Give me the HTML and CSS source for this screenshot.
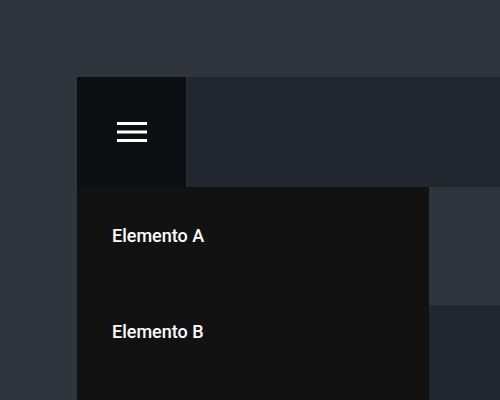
FILE: index.html
```html
<!DOCTYPE html>
<html lang="es">
<head>
<meta charset="utf-8">
<title>Menu</title>
<link rel="stylesheet" href="styles.css">
</head>
<body>
<div class="app">
  <header class="topbar">
    <button class="menu-btn" aria-label="Menú">
      <svg width="30" height="20" viewBox="0 0 30 20" aria-hidden="true">
        <rect x="0" y="0" width="30" height="3" fill="#ffffff"/>
        <rect x="0" y="8.5" width="30" height="3" fill="#ffffff"/>
        <rect x="0" y="17" width="30" height="3" fill="#ffffff"/>
      </svg>
    </button>
    <div class="topbar-fill"></div>
  </header>
  <div class="content">
    <nav class="drawer">
      <div class="drawer-item">Elemento A</div>
      <div class="drawer-item">Elemento B</div>
    </nav>
    <main class="main">
      <div class="panel"></div>
      <div class="rest"></div>
    </main>
  </div>
</div>
</body>
</html>
```

FILE: styles.css
```css
html, body {
  margin: 0;
  padding: 0;
  height: 100%;
  overflow: hidden;
}
body {
  background: #2f353c;
  font-family: Roboto, "Liberation Sans", sans-serif;
}
.app {
  margin: 77px 0 0 77px;
  height: 323px;
  display: flex;
  flex-direction: column;
}
.topbar {
  height: 110px;
  display: flex;
  flex-shrink: 0;
}
.menu-btn {
  width: 109px;
  height: 110px;
  border: 0;
  padding: 0;
  margin: 0;
  background: #0b0f11;
  display: flex;
  align-items: center;
  justify-content: center;
}
.menu-btn svg {
  display: block;
}
.topbar-fill {
  flex: 1;
  background: #21272e;
  border-left: 1px solid #262d34;
}
.content {
  flex: 1;
  display: flex;
}
.drawer {
  width: 352px;
  background: #121212;
  display: flex;
  flex-direction: column;
}
.drawer-item {
  height: 96px;
  display: flex;
  align-items: center;
  padding-left: 35px;
  color: #ffffff;
  font-size: 18px;
  font-weight: 500;
}
.main {
  flex: 1;
  display: flex;
  flex-direction: column;
}
.panel {
  height: 118px;
  background: #2e353c;
}
.rest {
  flex: 1;
  background: #21272e;
}
```
